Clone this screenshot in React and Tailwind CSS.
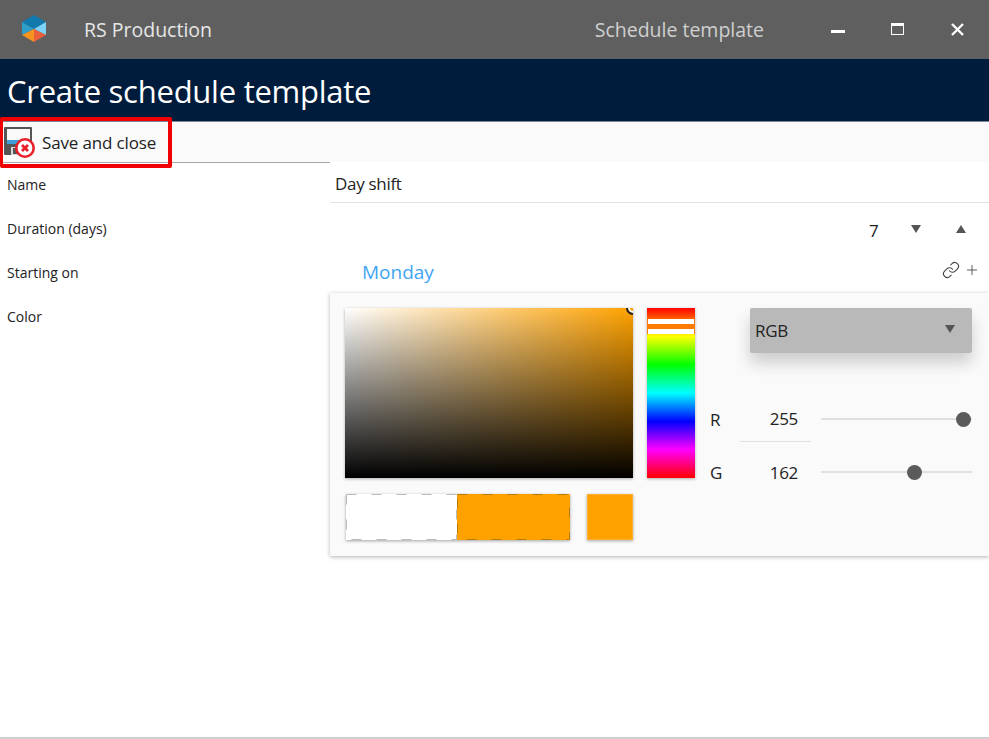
import { Link, Plus } from 'lucide-react';

const bodyFont = "font-['Open_Sans',sans-serif]";

const Logo = () => (
  <svg className="w-[24px] h-[28px]" viewBox="0 0 24 28">
    <polygon points="12,0 24,7 12,14 0,7" fill="#1279ad" />
    <polygon points="0,7 12,14 0,20" fill="#2f9fca" />
    <polygon points="24,7 24,20 12,14" fill="#7dd3f7" />
    <polygon points="0,20 12,14 12,27" fill="#f7941e" />
    <polygon points="24,20 12,14 12,27" fill="#e95f3b" />
  </svg>
);

const SaveCloseIcon = () => (
  <svg className="w-[34px] h-[34px]" viewBox="0 0 34 34">
    <path d="M3 2h26a1 1 0 0 1 1 1v27H3a1 1 0 0 1-1-1V3a1 1 0 0 1 1-1z" fill="#555" />
    <rect x="5" y="4" width="23" height="11" fill="#fafafa" />
    <rect x="5" y="15" width="23" height="4" fill="#3f9fd8" />
    <rect x="9" y="22" width="12" height="8" fill="#d8d8d8" />
    <rect x="11" y="23" width="4" height="6" fill="#555" />
    <circle cx="23" cy="23" r="8.7" fill="#fff" stroke="#e8202a" strokeWidth="2.6" />
    <path d="M20 20l6 6M26 20l-6 6" stroke="#e8202a" strokeWidth="2.8" />
  </svg>
);

const FieldLabel = ({ children }) => (
  <div className="h-[44px] flex items-center px-[7px] text-[14px] text-[#222]">{children}</div>
);

const DashedEdge = ({ color }) => (
  <svg className="absolute inset-0 w-full h-full" fill="none">
    <rect x="0.5" y="0.5" width="calc(100% - 1px)" height="calc(100% - 1px)" stroke={color} strokeDasharray="10 15" />
  </svg>
);

const ChannelRow = ({ label, value, thumb, underline }) => (
  <div className="flex items-center h-[45px] text-[#222]">
    <span className="w-[30px] text-[17px] tracking-[-0.3px]">{label}</span>
    <span className={`w-[71px] h-full flex items-center justify-end pr-[13px] text-[17px] tracking-[-0.3px] ${underline ? 'border-b border-[#e0e0e0]' : ''}`}>{value}</span>
    <div className="relative ml-[10px] mb-[2px] w-[151px] h-[2px] bg-[#e0e0e0]">
      <div className="absolute top-[-6px] w-[15px] h-[15px] rounded-full bg-[#5b5b5b]" style={{ left: thumb }} />
    </div>
  </div>
);

const App = () => {
  return (
    <div className={`${bodyFont} w-[989px] h-[739px] overflow-hidden relative bg-white flex flex-col`}>
      {/* Title bar */}
      <div className="h-[59px] bg-[#5f5f5f] flex items-center shrink-0">
        <div className="ml-[22px] mb-[1px]"><Logo /></div>
        <span className="ml-[38px] mt-[1px] text-[19.5px] text-[#e6e6e6]">RS Production</span>
        <span className="ml-auto mt-[1px] text-[19.5px] text-[#cfcfcf]">Schedule template</span>
        <div className="ml-[67px] w-[14px] h-[3px] mt-[3px] bg-white" />
        <div className="ml-[46px] w-[13px] h-[12px] mb-[1px] border border-white border-t-[3px]" />
        <svg className="ml-[47px] mr-[25px] w-[13px] h-[13px] mb-[1px]" viewBox="0 0 13 13">
          <path d="M1 1l11 11M12 1L1 12" stroke="#fff" strokeWidth="2.4" />
        </svg>
      </div>

      {/* Page header */}
      <div className="h-[63px] bg-[#001c3d] flex items-center px-[7px] pt-[2px] shrink-0 border-b border-[#7b8798]">
        <h1 className="text-[31px] tracking-[-0.25px] text-white">Create schedule template</h1>
      </div>

      {/* Toolbar */}
      <div className="h-[40px] bg-[#fafafa] flex items-center shrink-0 pl-[2px]">
        <SaveCloseIcon />
        <span className="ml-[6px] mt-[2px] text-[17px] tracking-[-0.15px] text-[#222]">Save and close</span>
      </div>

      {/* Red highlight round the button */}
      <div className="absolute left-0 top-[117px] w-[172px] h-[51px] border-[4px] border-l-[3px] border-[#f00000] rounded-[2px]" />

      {/* Form */}
      <div className="flex flex-1">
        <div className="w-[330px] shrink-0 shadow-[inset_0_1px_0_#a8a8a8]">
          <FieldLabel>Name</FieldLabel>
          <FieldLabel>Duration (days)</FieldLabel>
          <FieldLabel>Starting on</FieldLabel>
          <FieldLabel>Color</FieldLabel>
        </div>

        <div className="flex-1 min-w-0">
          <div className="h-[41px] ml-[1px] flex items-center pl-[4px] pt-[3px] text-[17px] tracking-[-0.3px] text-[#222] border-b border-[#e0e0e0] bg-white">Day shift</div>

          <div className="h-[52px] flex items-center text-[#222]">
            <span className="ml-[539px] mt-[4px] text-[17px]">7</span>
            <div className="ml-[32px] w-0 h-0 border-x-[5px] border-x-transparent border-t-[8px] border-t-[#555]" />
            <div className="ml-[35px] w-0 h-0 border-x-[5px] border-x-transparent border-b-[8px] border-b-[#555]" />
          </div>

          <div className="h-[38px] flex items-center pl-[32px] pb-[4px]">
            <span className="text-[19px] text-[#3fa5f5]">Monday</span>
            <Link className="ml-auto mb-[4px] w-[18px] h-[18px] text-[#444]" strokeWidth={1.5} />
            <Plus className="ml-[4px] mr-[9px] mb-[4px] w-[16px] h-[16px] text-[#444]" strokeWidth={1.3} />
          </div>

          {/* Colour picker */}
          <div className="h-[263px] bg-[#fafafa] shadow-[0_1px_4px_rgba(0,0,0,0.3)] flex pt-[15px] pl-[15px]">
            <div className="w-[288px]">
              <div className="relative h-[170px] overflow-hidden bg-linear-to-r/srgb from-white to-[#ffa200] shadow-[0_1px_3px_rgba(0,0,0,0.3)]">
                <div className="absolute inset-0 bg-linear-to-t/srgb from-black to-transparent" />
                <div className="absolute right-[-7px] top-[-7px] w-[14px] h-[14px] rounded-full border-2 border-[#222] ring-2 ring-inset ring-white" />
              </div>
              <div className="flex mt-[16px] ml-[1px]">
                <div className="flex w-[224px] h-[46px] shadow-[0_1px_3px_rgba(0,0,0,0.35)]">
                  <div className="relative w-[111px] bg-white"><DashedEdge color="#bbbbbb" /></div>
                  <div className="relative w-[113px] bg-[#ffa200]"><DashedEdge color="#b87a00" /></div>
                </div>
                <div className="ml-[17px] w-[46px] h-[46px] bg-[#ffa200] border border-[#ffb030] shadow-[0_1px_3px_rgba(0,0,0,0.35)]" />
              </div>
            </div>

            <div className="relative ml-[14px] w-[48px] h-[170px] bg-[linear-gradient(to_bottom,#f00,#ff0,#0f0,#0ff,#00f,#f0f,#f00)] shadow-[0_1px_3px_rgba(0,0,0,0.3)]">
              <div className="absolute left-0 right-0 top-[11px] h-[15px] bg-[#ff7a00] flex flex-col justify-between">
                <div className="h-[5px] mx-[1px] bg-white" />
                <div className="h-[5px] mx-[1px] bg-white" />
              </div>
            </div>

            <div className="ml-[15px] w-[262px]">
              <div className="ml-[40px] w-[222px] h-[45px] bg-[#b9b9b9] rounded-[2px] shadow-[0_10px_16px_rgba(0,0,0,0.18)] flex items-center pl-[5px] pr-[17px] text-[17px] tracking-[-0.3px] text-[#222]">
                <span>RGB</span>
                <div className="ml-auto mb-[3px] w-0 h-0 border-x-[5px] border-x-transparent border-t-[8px] border-t-[#555]" />
              </div>
              <div className="mt-[44px]">
                <ChannelRow label="R" value="255" thumb={135} underline />
                <div className="mt-[8px]">
                  <ChannelRow label="G" value="162" thumb={86} />
                </div>
              </div>
            </div>
          </div>
        </div>
      </div>

      <div className="h-[2px] bg-[#d0d0d0] shrink-0" />
    </div>
  );
};

export default App;
